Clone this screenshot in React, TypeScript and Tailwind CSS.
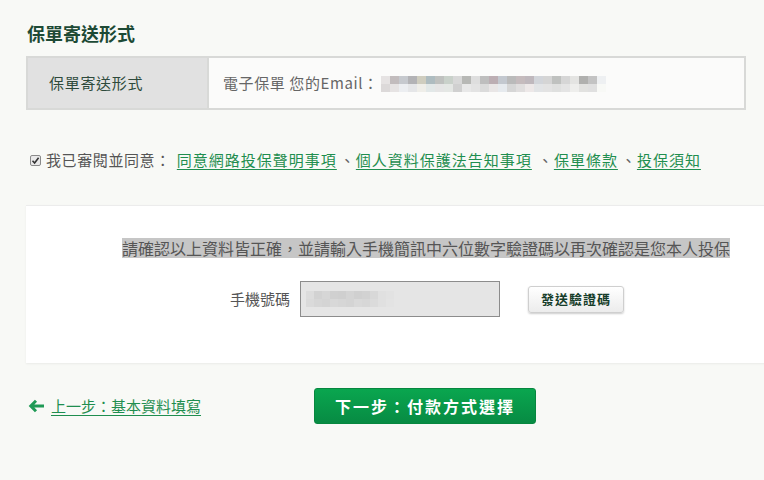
import React from "react";

const FONT = '"Noto Sans CJK TC", "Noto Sans", "Liberation Sans", sans-serif';

const emailTop = ["#e6e3e3","#c2bcbd","#c6c9ce","#b3b3b6","#cfcdbf","#aebcc0","#bfc1bf","#c9d1ca","#d8d8d8","#b7b8b5","#dedede","#bebebe","#bcaeb3","#c3c8cf","#bababa","#c5bbbd","#bfb8bd","#d2d5da","#d5d5d5","#bfc1bf","#d6d6d6","#e4e4e2","#b0b0ae","#c3c3c3","#eef0f2"];
const emailBot = ["#dcd9d9","#e6e3e3","#eceef1","#e5e6e8","#efeee9","#e2e8e8","#e5e5e5","#e4e7e4","#d0d0d0","#e8e8e8","#e3e3e3","#dbdbdb","#e9e6e6","#e6eaee","#d6d6d6","#e0dede","#ede8e8","#e2e4e6","#e3e3e3","#dfe0df","#e4e4e4","#eeeeec","#e2e2e0","#e0e0e0","#f8f9f6"];
const phoneTop = ["#dcdcdc","#d2d2d2","#d6d6d6","#d0d0d0","#cfcfcf","#d4d4d4","#d0d0d0","#d2d2d2","#d8d8d8","#e0e0e0","#e2e2e2"];
const phoneBot = ["#dadada","#d6d6d6","#d4d4d4","#d8d8d8","#d6d6d6","#d4d4d4","#d9d9d9","#d7d7d7","#dbdbdb","#e0e0e0","#e3e3e3"];

function Blur({ top, bot, w }: { top: string[]; bot: string[]; w: number }) {
  return (
    <div className="flex flex-col">
      <div className="flex">
        {top.map((c, i) => (
          <div key={i} className="h-[8px]" style={{ width: w, background: c }} />
        ))}
      </div>
      <div className="flex">
        {bot.map((c, i) => (
          <div key={i} className="h-[8px]" style={{ width: w, background: c }} />
        ))}
      </div>
    </div>
  );
}

function Sep() {
  return <span className="ml-[3px] mr-[1px] text-[#666]">、</span>;
}

export default function App() {
  return (
    <div
      className="w-[764px] h-[480px] overflow-hidden bg-[#f8f9f6] text-[#555]"
      style={{ fontFamily: FONT }}
    >
      <div className="pl-[26px] pt-[20px]">
        <h2 className="text-[18px] leading-[26px] font-bold text-[#1d4a35] pl-[1px]">保單寄送形式</h2>

        <div className="mt-[10px] w-[720px] h-[54px] flex border-2 border-[#d8d9d7]">
          <div className="w-[179px] bg-[#e1e1e1] flex items-center pl-[21px] text-[15px] tracking-[0.7px] text-[#2e4a3c]">
            保單寄送形式
          </div>
          <div className="flex-1 bg-[#fbfbfa] border-l-2 border-[#d8d9d7] flex items-center pl-[14px] text-[15px] tracking-[0.6px] text-[#666]">
            <span>電子保單 您的Email：</span>
            <div className="ml-[2px] mt-[2px]">
              <Blur top={emailTop} bot={emailBot} w={9} />
            </div>
          </div>
        </div>

        <div className="mt-[39px] flex items-center text-[15px] leading-[22px] pl-[4px]">
          <span className="w-[11px] h-[11px] rounded-[2px] border border-[#8a8a8a] bg-[#e9e9e9] flex items-center justify-center mr-[5px]">
            <svg width="9" height="9" viewBox="0 0 9 9">
              <path d="M1.5 4.8 L3.6 7 L7.6 1.8" stroke="#333" strokeWidth="1.6" fill="none" />
            </svg>
          </span>
          <span className="text-[#555] tracking-[0.6px]">我已審閱並同意：</span>
          <a className="ml-[6px] underline underline-offset-[3px] text-[#1f8e4f] tracking-[1px]">同意網路投保聲明事項</a>
          <Sep />
          <a className="underline underline-offset-[3px] text-[#1f8e4f] tracking-[1px]">個人資料保護法告知事項</a>
          <span className="ml-[3px]"><Sep /></span>
          <a className="underline underline-offset-[3px] text-[#1f8e4f] tracking-[1px]">保單條款</a>
          <Sep />
          <a className="underline underline-offset-[3px] text-[#1f8e4f] tracking-[1px]">投保須知</a>
        </div>

        <div className="mt-[34px] w-[760px] h-[158px] bg-white border-t border-[#ececec] shadow-[0_1px_2px_rgba(0,0,0,0.06)] pt-[30px]">
          <div className="pl-[96px]">
            <span className="inline-block bg-[#c6c6c6] text-[#555] text-[16px] leading-[20px]">
              請確認以上資料皆正確，並請輸入手機簡訊中六位數字驗證碼以再次確認是您本人投保
            </span>
          </div>
          <div className="mt-[21px] pl-[204px] flex items-center">
            <span className="text-[15px] text-[#555] mr-[10px]">手機號碼</span>
            <div className="w-[200px] h-[36px] bg-[#e5e5e5] border border-[#8c8c8c] flex items-center pl-[5px]">
              <Blur top={phoneTop} bot={phoneBot} w={8} />
            </div>
            <button className="ml-[28px] w-[96px] h-[27px] rounded-[3px] border border-[#cfcfcf] bg-gradient-to-b from-white to-[#ececec] shadow-[0_1px_2px_rgba(0,0,0,0.2)] text-[13px] font-bold text-[#163d2a] tracking-[1px]">
              發送驗證碼
            </button>
          </div>
        </div>

        <div className="mt-[25px] flex items-center">
          <a className="flex items-center pl-[2px] text-[15px] leading-[22px] text-[#1f8e4f]">
            <svg width="17" height="14" viewBox="0 0 17 14" className="mr-[6px]">
              <path d="M16 7 H3 M8 1.8 L2.8 7 L8 12.2" stroke="#1f9a55" strokeWidth="3" fill="none" />
            </svg>
            <span className="underline underline-offset-[3px]">上一步：基本資料填寫</span>
          </a>
          <button className="ml-[113px] w-[222px] h-[36px] rounded-[3px] bg-gradient-to-b from-[#0aa64f] to-[#078b43] border border-[#07873f] text-white text-[16px] font-bold tracking-[2px]">
            下一步：付款方式選擇
          </button>
        </div>
      </div>
    </div>
  );
}
